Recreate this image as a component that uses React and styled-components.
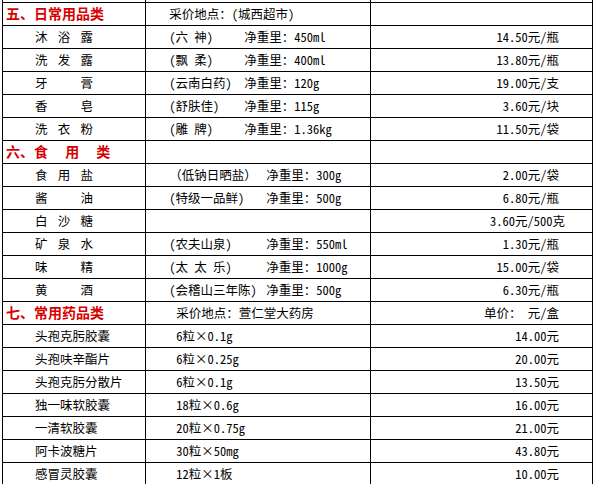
import React from 'react';
import styled, { createGlobalStyle } from 'styled-components';

const GlobalStyle = createGlobalStyle`
  html, body {
    margin: 0;
    padding: 0;
    background: #fff;
    overflow: hidden;
  }
  body {
    font-family: "Noto Sans Mono CJK SC", "Noto Sans CJK SC", sans-serif;
    color: #000;
  }
`;

const Wrapper = styled.div`
  padding-left: 2px;
  height: 484px;
  overflow: hidden;
`;

const Sheet = styled.table`
  border-collapse: collapse;
  table-layout: fixed;
  width: 591px;
`;

const Row = styled.tr`
  height: ${p => (p.$filler ? 2 : 23)}px;
`;

const Cell = styled.td`
  border: 1px solid #000;
  border-top: ${p => (p.$open ? 'none' : '1px solid #000')};
  padding: 0;
  padding-left: ${p => p.$left || 0}px;
  padding-right: ${p => p.$right || 0}px;
  text-align: ${p => p.$align || 'left'};
  font-size: 12.5px;
  line-height: 14px;
  white-space: nowrap;
  overflow: hidden;
  vertical-align: middle;
`;

const SectionTitle = styled.span`
  color: #d80000;
  font-weight: bold;
  font-size: 14px;
  font-family: "Noto Sans CJK SC", sans-serif;
`;

const Spread = styled.span`
  display: inline-flex;
  justify-content: space-between;
  width: 58px;
`;

const Spec = styled.span`
  display: inline-flex;
  align-items: baseline;
`;

const Brand = styled.span`
  min-width: ${p => p.$w}px;
  white-space: nowrap;
  flex-shrink: 0;
`;

const daily = [
  ['沐浴露', '(六 神)', '450ml', '14.50元/瓶'],
  ['洗发露', '(飘 柔)', '400ml', '13.80元/瓶'],
  ['牙膏', '(云南白药)', '120g', '19.00元/支'],
  ['香皂', '(舒肤佳)', '115g', '3.60元/块'],
  ['洗衣粉', '(雕 牌)', '1.36kg', '11.50元/袋'],
];

const food = [
  ['食用盐', '（低钠日晒盐）', '300g', '2.00元/袋'],
  ['酱油', '(特级一品鲜)', '500g', '6.80元/瓶'],
  ['白沙糖', null, null, '3.60元/500克', 27],
  ['矿泉水', '(农夫山泉)', '550ml', '1.30元/瓶'],
  ['味精', '(太 太 乐)', '1000g', '15.00元/袋'],
  ['黄酒', '(会稽山三年陈)', '500g', '6.30元/瓶'],
];

const medicine = [
  ['头孢克肟胶囊', '6粒×0.1g', '14.00元'],
  ['头孢呋辛酯片', '6粒×0.25g', '20.00元'],
  ['头孢克肟分散片', '6粒×0.1g', '13.50元'],
  ['独一味软胶囊', '18粒×0.6g', '16.00元'],
  ['一清软胶囊', '20粒×0.75g', '21.00元'],
  ['阿卡波糖片', '30粒×50mg', '43.80元'],
  ['感冒灵胶囊', '12粒×1板', '10.00元'],
];

function SpreadName({ name }) {
  return (
    <Spread>
      {name.split('').map((ch, i) => (
        <span key={i}>{ch}</span>
      ))}
    </Spread>
  );
}

function GoodsRow({ item, brandWidth }) {
  const [name, brand, weight, price, right] = item;
  return (
    <Row>
      <Cell $left={32}>
        <SpreadName name={name} />
      </Cell>
      <Cell $left={23}>
        {brand && (
          <Spec>
            <Brand $w={brandWidth}>{brand}</Brand>
            <span>净重里：{weight}</span>
          </Spec>
        )}
      </Cell>
      <Cell $align="right" $right={right || 33}>
        {price}
      </Cell>
    </Row>
  );
}

export default function App() {
  return (
    <Wrapper>
      <GlobalStyle />
      <Sheet>
        <colgroup>
          <col style={{ width: 143 }} />
          <col style={{ width: 224 }} />
          <col style={{ width: 222 }} />
        </colgroup>
        <tbody>
          <Row $filler>
            <Cell $open />
            <Cell $open />
            <Cell $open />
          </Row>

          <Row>
            <Cell $left={3}>
              <SectionTitle>五、日常用品类</SectionTitle>
            </Cell>
            <Cell $left={23}>采价地点：(城西超市)</Cell>
            <Cell />
          </Row>
          {daily.map(item => (
            <GoodsRow key={item[0]} item={item} brandWidth={75} />
          ))}

          <Row>
            <Cell $left={3}>
              <SectionTitle>六、食　 用　 类</SectionTitle>
            </Cell>
            <Cell />
            <Cell />
          </Row>
          {food.map(item => (
            <GoodsRow key={item[0]} item={item} brandWidth={97} />
          ))}

          <Row>
            <Cell $left={3}>
              <SectionTitle>七、常用药品类</SectionTitle>
            </Cell>
            <Cell $left={30}>采价地点：萱仁堂大药房</Cell>
            <Cell $align="right" $right={33}>
              单价：&nbsp;元/盒
            </Cell>
          </Row>
          {medicine.map(([name, spec, price]) => (
            <Row key={name}>
              <Cell $left={32}>{name}</Cell>
              <Cell $left={30}>{spec}</Cell>
              <Cell $align="right" $right={33}>
                {price}
              </Cell>
            </Row>
          ))}
        </tbody>
      </Sheet>
    </Wrapper>
  );
}
